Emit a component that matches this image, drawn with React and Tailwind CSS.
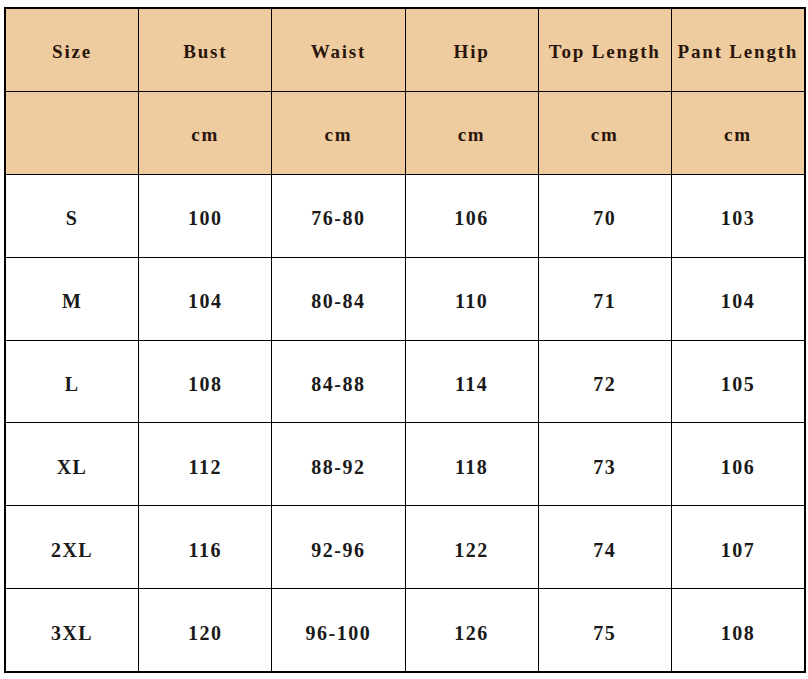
import React from 'react';

const headers = ['Size', 'Bust', 'Waist', 'Hip', 'Top Length', 'Pant Length'];
const units = ['', 'cm', 'cm', 'cm', 'cm', 'cm'];
const rows = [
  ['S', '100', '76-80', '106', '70', '103'],
  ['M', '104', '80-84', '110', '71', '104'],
  ['L', '108', '84-88', '114', '72', '105'],
  ['XL', '112', '88-92', '118', '73', '106'],
  ['2XL', '116', '92-96', '122', '74', '107'],
  ['3XL', '120', '96-100', '126', '75', '108'],
];

const App = () => {
  return (
    <div className="w-[808px] h-[679px] bg-white pt-[7px] pl-[4px]" style={{ fontFamily: '"Liberation Serif", "Times New Roman", serif' }}>
      <div className="w-[802px] h-[666px] border-2 border-black bg-black grid grid-cols-6 grid-rows-8 gap-px">
        {headers.map((h, i) => (
          <div key={'h' + i} className="bg-[#efcc9f] flex items-center justify-center pt-[5px] text-[19px] font-bold tracking-[1.8px] text-[#2a160c] whitespace-nowrap">
            {h}
          </div>
        ))}
        {units.map((u, i) => (
          <div key={'u' + i} className="bg-[#efcc9f] flex items-center justify-center pt-[5px] text-[19px] font-bold tracking-[1.8px] text-[#2a160c]">
            {u}
          </div>
        ))}
        {rows.map((r, ri) =>
          r.map((c, ci) => (
            <div key={ri + '-' + ci} className="bg-white flex items-center justify-center pt-[5px] text-[20px] font-bold tracking-[1.5px] text-[#1a1a1a]">
              {c}
            </div>
          ))
        )}
      </div>
    </div>
  );
};

export default App;
